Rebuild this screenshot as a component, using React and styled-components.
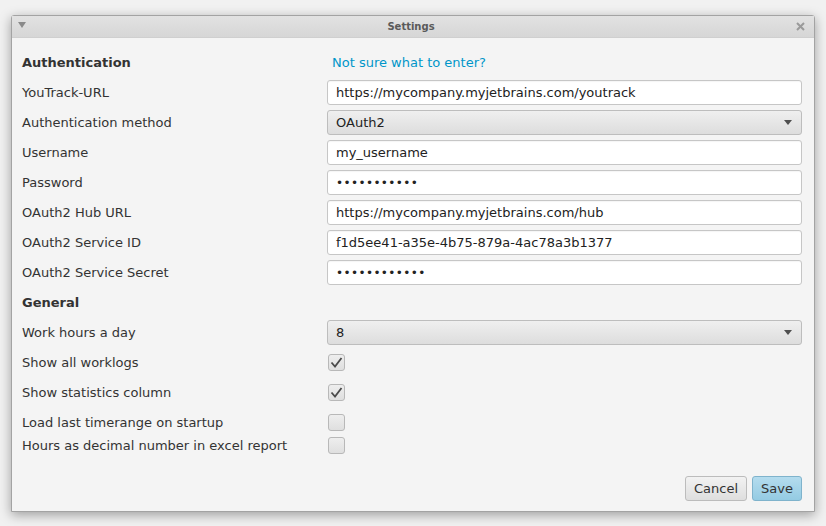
import React from "react";
import styled, { createGlobalStyle } from "styled-components";

const GlobalStyle = createGlobalStyle`
  html, body {
    margin: 0;
    padding: 0;
    background: #f1f1f1;
  }
  body {
    font-family: "DejaVu Sans", "Liberation Sans", sans-serif;
    font-size: 13px;
    color: #333;
  }
`;

const authRows = [
  { label: "YouTrack-URL", kind: "text", value: "https://mycompany.myjetbrains.com/youtrack" },
  { label: "Authentication method", kind: "combo", value: "OAuth2" },
  { label: "Username", kind: "text", value: "my_username" },
  { label: "Password", kind: "password", value: 11 },
  { label: "OAuth2 Hub URL", kind: "text", value: "https://mycompany.myjetbrains.com/hub" },
  { label: "OAuth2 Service ID", kind: "text", value: "f1d5ee41-a35e-4b75-879a-4ac78a3b1377" },
  { label: "OAuth2 Service Secret", kind: "password", value: 12 },
];

const generalRows = [
  { label: "Work hours a day", kind: "combo", value: "8" },
  { label: "Show all worklogs", kind: "check", value: true },
  { label: "Show statistics column", kind: "check", value: true },
  { label: "Load last timerange on startup", kind: "check", value: false },
  { label: "Hours as decimal number in excel report", kind: "check", value: false, tight: true },
];

function Field({ row }) {
  if (row.kind === "combo") {
    return (
      <Combo>
        <span>{row.value}</span>
        <Arrow />
      </Combo>
    );
  }
  if (row.kind === "password") {
    return <TextBox $dots>{"•".repeat(row.value)}</TextBox>;
  }
  if (row.kind === "check") {
    return (
      <CheckBox>
        {row.value && (
          <svg width="13" height="11" viewBox="0 0 13 11">
            <path d="M1.5 5.5 L5 9.5 L11.5 1" fill="none" stroke="#4a4a4a" strokeWidth="1.8" />
          </svg>
        )}
      </CheckBox>
    );
  }
  return <TextBox>{row.value}</TextBox>;
}

function FormRow({ row }) {
  return (
    <Row $tight={row.tight}>
      <Label>{row.label}</Label>
      <Field row={row} />
    </Row>
  );
}

export default function App() {
  return (
    <>
      <GlobalStyle />
      <Page>
        <Window>
          <TitleBar>
            <MenuArrow />
            <Title>Settings</Title>
            <Close>
              <svg width="9" height="9" viewBox="0 0 9 9">
                <path d="M1 1 L8 8 M8 1 L1 8" stroke="#9a9a9a" strokeWidth="2" />
              </svg>
            </Close>
          </TitleBar>
          <Content>
            <Form>
              <Row>
                <Heading>Authentication</Heading>
                <HelpLink>Not sure what to enter?</HelpLink>
              </Row>
              {authRows.map((r) => (
                <FormRow key={r.label} row={r} />
              ))}
              <Row>
                <Heading>General</Heading>
              </Row>
              {generalRows.map((r) => (
                <FormRow key={r.label} row={r} />
              ))}
            </Form>
            <ButtonBar>
              <Button>Cancel</Button>
              <Button $primary>Save</Button>
            </ButtonBar>
          </Content>
        </Window>
      </Page>
    </>
  );
}

const Page = styled.div`
  padding: 15px 11px 14px;
  width: 826px;
  height: 526px;
  box-sizing: border-box;
`;

const Window = styled.div`
  width: 804px;
  height: 497px;
  box-sizing: border-box;
  border: 1px solid #a3a3a3;
  border-radius: 3px 3px 0 0;
  background: #f4f4f4;
  box-shadow: 0 3px 12px rgba(0, 0, 0, 0.35);
  display: flex;
  flex-direction: column;
`;

const TitleBar = styled.div`
  height: 21px;
  flex-shrink: 0;
  display: flex;
  align-items: center;
  padding: 0 9px 0 6px;
  background: linear-gradient(#e2e2e2, #d6d6d6);
  border-bottom: 1px solid #cfcfcf;
`;

const MenuArrow = styled.div`
  width: 0;
  height: 0;
  border-left: 4px solid transparent;
  border-right: 4px solid transparent;
  border-top: 6px solid #8a8a8a;
  margin-top: -3px;
`;

const Title = styled.div`
  flex: 1;
  text-align: center;
  font-size: 10px;
  font-weight: bold;
  color: #5a5a5a;
`;

const Close = styled.div`
  display: flex;
  align-items: center;
`;

const Content = styled.div`
  flex: 1;
  display: flex;
  flex-direction: column;
  padding: 12px 12px 10px 10px;
`;

const Form = styled.div`
  display: flex;
  flex-direction: column;
  gap: 5px;
`;

const Row = styled.div`
  display: grid;
  grid-template-columns: 305px 1fr;
  align-items: center;
  height: ${(p) => (p.$tight ? "17px" : "25px")};
  margin-top: ${(p) => (p.$tight ? "-3px" : "0")};
`;

const Label = styled.div`
  color: #333;
  white-space: nowrap;
`;

const Heading = styled.div`
  font-weight: bold;
  color: #333;
`;

const HelpLink = styled.a`
  color: #0096c9;
  padding-left: 5px;
  cursor: pointer;
`;

const TextBox = styled.div`
  height: 25px;
  box-sizing: border-box;
  background: #fff;
  border: 1px solid #c6c6c6;
  border-radius: 3px;
  padding: 0 8px;
  display: flex;
  align-items: center;
  color: #222;
  font-size: ${(p) => (p.$dots ? "12px" : "13px")};
  letter-spacing: ${(p) => (p.$dots ? "0.4px" : "0")};
  box-shadow: inset 0 1px 1px rgba(0, 0, 0, 0.04);
`;

const Combo = styled.div`
  height: 25px;
  box-sizing: border-box;
  background: linear-gradient(#efefef, #dddddd);
  border: 1px solid #bdbdbd;
  border-radius: 3px;
  padding: 0 9px 0 8px;
  display: flex;
  align-items: center;
  justify-content: space-between;
  color: #222;
`;

const Arrow = styled.div`
  width: 0;
  height: 0;
  border-left: 4px solid transparent;
  border-right: 4px solid transparent;
  border-top: 5px solid #4f4f4f;
`;

const CheckBox = styled.div`
  width: 17px;
  height: 17px;
  box-sizing: border-box;
  margin-left: 1px;
  border: 1px solid #b8b8b8;
  border-radius: 3px;
  background: linear-gradient(#eeeeee, #dfdfdf);
  display: flex;
  align-items: center;
  justify-content: center;
`;

const ButtonBar = styled.div`
  margin-top: auto;
  display: flex;
  justify-content: flex-end;
  gap: 5px;
`;

const Button = styled.button`
  height: 25px;
  padding: 0 8px;
  font-family: inherit;
  font-size: 13px;
  color: #333;
  border-radius: 3px;
  border: 1px solid ${(p) => (p.$primary ? "#7fb3cc" : "#bcbcbc")};
  background: ${(p) =>
    p.$primary
      ? "linear-gradient(#b4dcee, #94cbe3)"
      : "linear-gradient(#f2f2f2, #dedede)"};
`;
